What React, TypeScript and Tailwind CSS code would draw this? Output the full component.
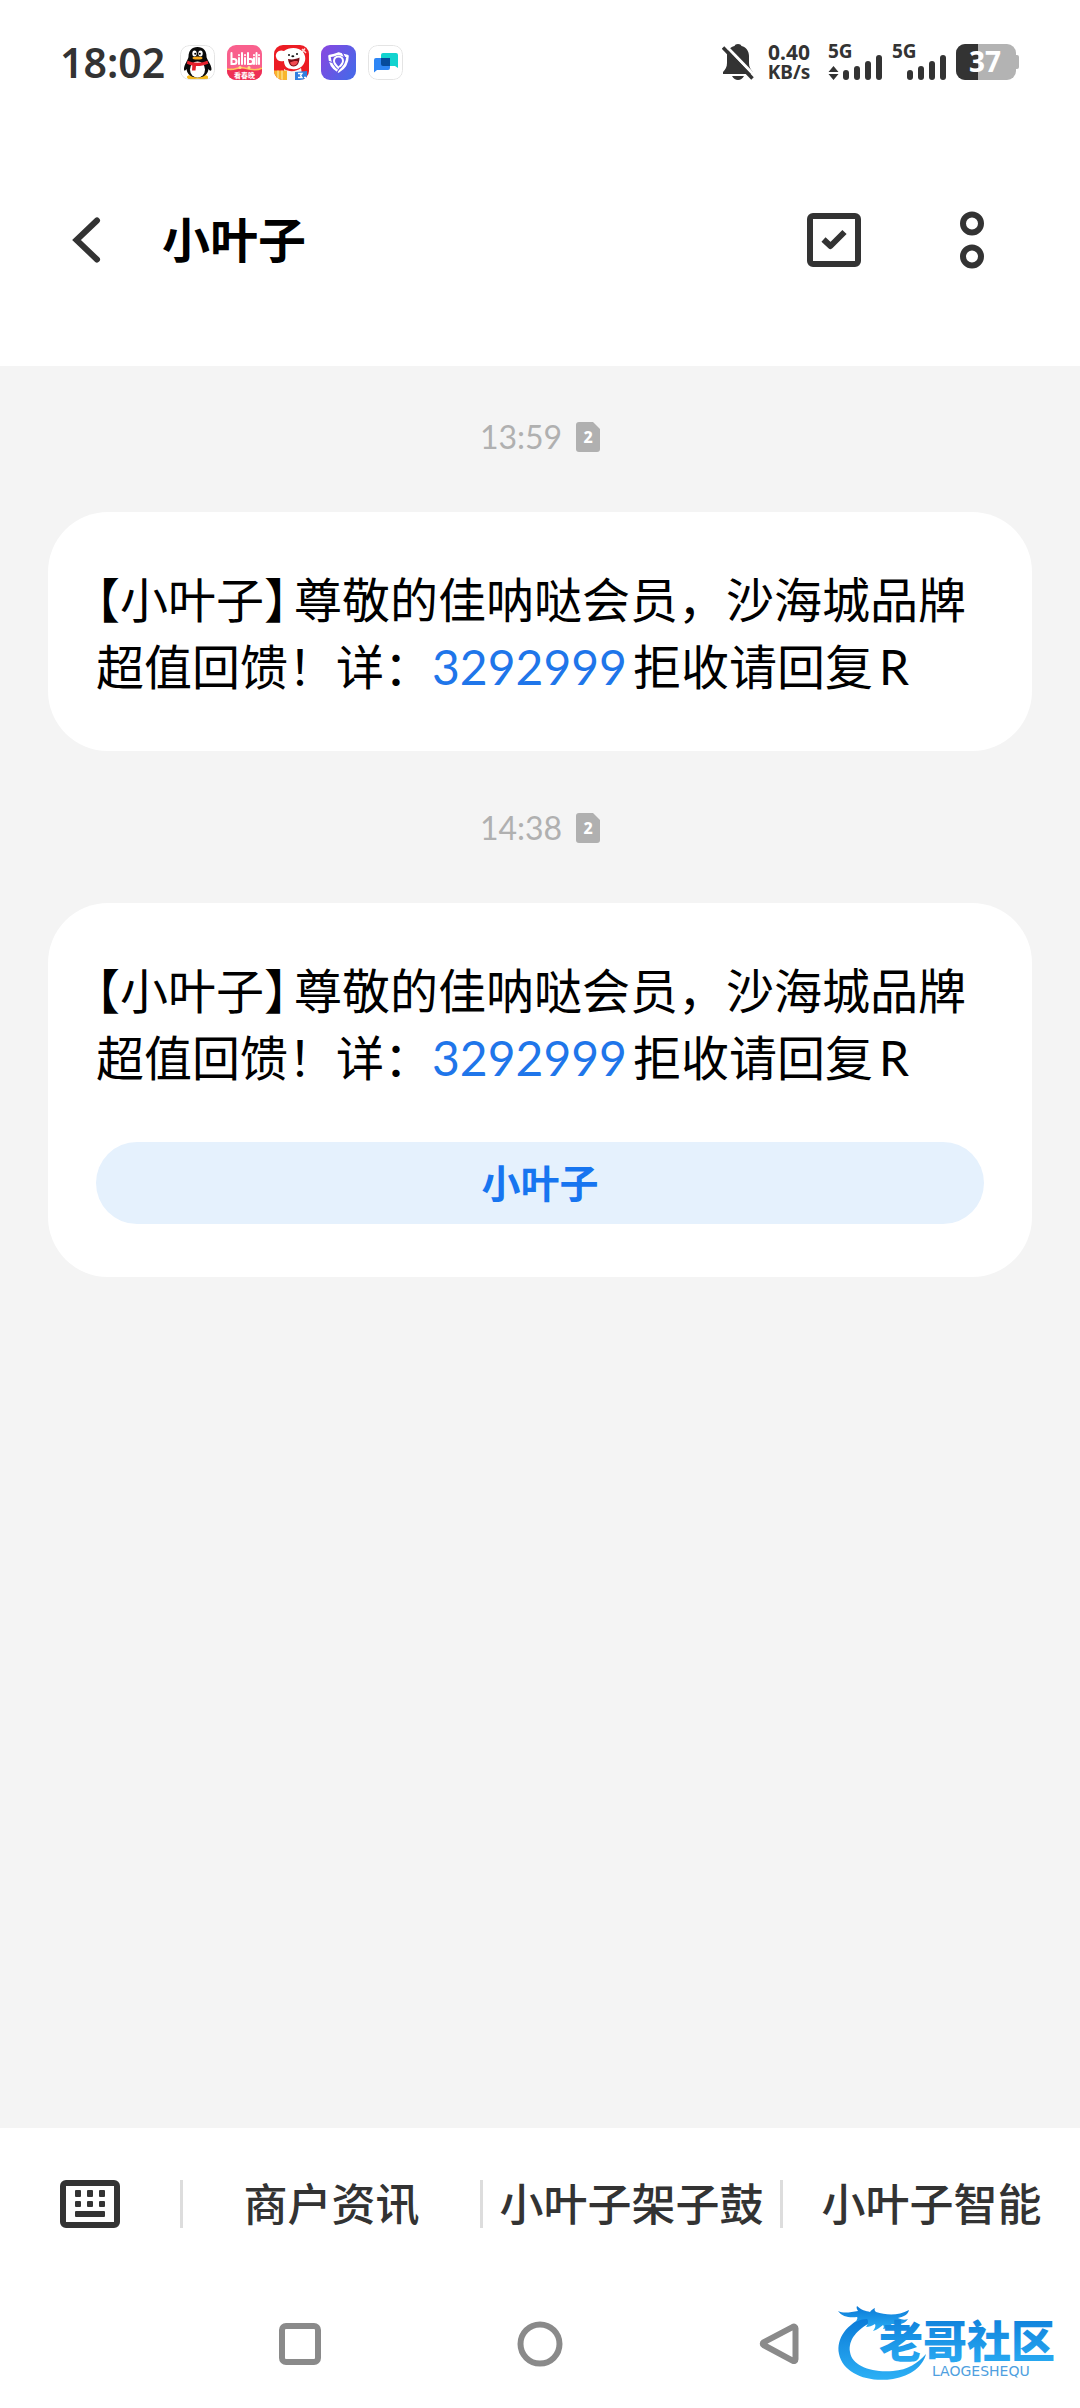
import type { ReactNode } from 'react'

interface Message {
  id: number
  time: string
  sim: number
  sender: string
  before: string
  code: string
  after: string
  action?: string
}

const MESSAGES: Message[] = [
  {
    id: 1,
    time: '13:59',
    sim: 2,
    sender: '小叶子',
    before: '尊敬的佳呐哒会员，沙海城品牌超值回馈！详：',
    code: '3292999',
    after: '拒收请回复R',
  },
  {
    id: 2,
    time: '14:38',
    sim: 2,
    sender: '小叶子',
    before: '尊敬的佳呐哒会员，沙海城品牌超值回馈！详：',
    code: '3292999',
    after: '拒收请回复R',
    action: '小叶子',
  },
]

const MENU = ['商户资讯', '小叶子架子鼓', '小叶子智能']

function AppIcon({ children }: { children: ReactNode }) {
  return (
    <svg viewBox="0 0 35 35" className="size-[35px] rounded-[9px]" aria-hidden="true">
      {children}
    </svg>
  )
}

function PenguinIcon() {
  return (
    <AppIcon>
      <rect x="0.5" y="0.5" width="34" height="34" rx="9" fill="#fff" stroke="#e4e4e4" />
      <path d="M7 31.5h21v2.5H8z" fill="#f2c94c" />
      <ellipse cx="12" cy="32" rx="5" ry="2" fill="#f5b81c" />
      <ellipse cx="23" cy="32" rx="5" ry="2" fill="#f5b81c" />
      <path d="M17.500 2c-6 0-9 4-9 9.500 0 3-4.500 8-4.500 12.500 0 2 1 2.500 2.500 0 .5 5 4.500 8.500 11 8.500s10.500-3.500 11-8.500c1.500 2.500 3 2 3 0 0-4.500-5-9.500-5-12.500 0-5.500-3-9.500-9-9.500z" fill="#0a0a0a" />
      <ellipse cx="17.500" cy="24.500" rx="7.500" ry="8" fill="#fff" />
      <ellipse cx="14.500" cy="8.500" rx="2.200" ry="2.900" fill="#fff" />
      <ellipse cx="20.500" cy="8.500" rx="2.200" ry="2.900" fill="#fff" />
      <circle cx="15.200" cy="8.800" r="1" fill="#000" />
      <circle cx="19.800" cy="8.800" r="1" fill="#000" />
      <ellipse cx="17.500" cy="13" rx="5" ry="1.500" fill="#f7a81b" />
      <path d="M7.500 15.500c6 3 14 3 20 0l.8 3.300c-5 2-9 2.400-12.300 2.200l-.5 4.500h-3.500l.3-5.100c-2-.3-3.800-.8-5.400-1.600z" fill="#e5202b" />
    </AppIcon>
  )
}

function VideoIcon() {
  return (
    <AppIcon>
      <rect width="35" height="35" fill="#f9608d" />
      <g stroke="#fff" strokeWidth="2" fill="none" strokeLinecap="round">
        <path d="M4.500 8v11h2.500a2.500 2.500 0 0 0 0-5H4.500M12 13v6M15 8v11M12 10v.2M18 13v6M18 10v.2" />
        <path d="M21 8v11h2.500a2.500 2.500 0 0 0 0-5H21M27 13v6M29.500 8v11M32 13v6M27 10v.2M32 10v.2" />
      </g>
      <path d="M0 23c6 3 11-2 17.500 0S29 26 35 22v13H0z" fill="#ee2f55" />
      <path d="M0 24c8 2 11-3 17.500-1S30 26 35 23" stroke="#ffc45c" strokeWidth="1.600" fill="none" />
      <circle cx="13" cy="22.500" r="1.500" fill="#ffe28a" />
      <circle cx="22" cy="22.500" r="1.500" fill="#ffe28a" />
      <text x="17.500" y="33" fontSize="7" fontWeight="700" textAnchor="middle" fill="#fff" fontFamily="'Noto Sans CJK SC', sans-serif">看春晚</text>
    </AppIcon>
  )
}

function ShopIcon() {
  return (
    <AppIcon>
      <rect width="35" height="35" fill="#ec1c24" />
      <path d="M28 4l4 4M31 3.500l-4 5" stroke="#ffd5d5" strokeWidth="1.500" />
      <path d="M2 12c-1-4 3-8 8-6 5-4 15-4 19 1 3 4 3 9 0 13-2 3-7 5-11 4-5 0-8-3-8-8-4 1-7 0-8-4z" fill="#fff" />
      <path d="M14 14c4 1 9 0 11.500-1.500 0 5-2 9-6 9-3 0-5-3-5.500-7.500z" fill="#7a0d16" />
      <path d="M16 17.500c2-1 6-2 8-1-1 4.500-6 6-8 1z" fill="#ef4a50" />
      <circle cx="15" cy="10" r="1" fill="#111" />
      <circle cx="23" cy="9" r="1" fill="#111" />
      <ellipse cx="18.800" cy="11.300" rx="1.500" ry="1" fill="#111" />
      <path d="M10 24c5 3 12 3 17-1l2 12H10z" fill="#f4f4f4" />
      <path d="M0 25.500h13V35H0z" fill="#f8b62d" />
      <path d="M4 25.500V35M8 25.500V35" stroke="#fff0b0" strokeWidth="1" />
      <path d="M21 27l12-1v9H21z" fill="#2f7fe0" />
      <path d="M24 28.500h4l-1.500 2 1.500 2h-4M30 32.500h2" stroke="#fff" strokeWidth="1.300" fill="none" />
    </AppIcon>
  )
}

function ShieldIcon() {
  return (
    <AppIcon>
      <defs>
        <linearGradient id="shield" x1="0" y1="0" x2="1" y2="0.600">
          <stop offset="0" stopColor="#8a45e0" />
          <stop offset="1" stopColor="#4a66e8" />
        </linearGradient>
      </defs>
      <rect width="35" height="35" fill="url(#shield)" />
      <path d="M8.500 11C13 10.500 15 9.500 17.500 8.500c2.500 1 5 2 9 2.500 0 7-3 12-9 15.500-6-3.500-9-8.500-9-15.500z" fill="none" stroke="#fff" strokeWidth="2.600" strokeLinejoin="round" />
      <path d="M13 16c0-2.500 2-4.500 4.500-4.500s4.500 2 4.500 4.500-2 4.500-4.500 7c-2.500-2.500-4.500-4.500-4.500-7z" fill="none" stroke="#fff" strokeWidth="2" />
      <path d="M6.500 16l5 1.500M21.500 8l2.500 5M15.500 28l4-6" stroke="#6a55e5" strokeWidth="1.200" />
    </AppIcon>
  )
}

function MeetingIcon() {
  return (
    <AppIcon>
      <rect x="0.500" y="0.500" width="34" height="34" rx="9" fill="#fff" stroke="#e4e4e4" />
      <path d="M15 8h13a2 2 0 0 1 2 2v13l-3-2H15a2 2 0 0 1-2-2v-9a2 2 0 0 1 2-2z" fill="#12d3cf" />
      <path d="M8 13h14v10a2 2 0 0 1-2 2H9l-3 2.500V15a2 2 0 0 1 2-2z" fill="#2e86f5" />
      <path d="M13 13h9v8h-7a2 2 0 0 1-2-2z" fill="#064b9c" />
    </AppIcon>
  )
}

function MutedBell() {
  return (
    <svg viewBox="0 0 32 36" className="h-9 w-8" aria-hidden="true">
      <path d="M16 0c-2 0-3 .8-3.500 2C8 3.200 5 7 5 12v7c0 4-1.500 6-4 9v2h30v-2c-2.500-3-4-5-4-9v-7c0-5-3-8.800-7.500-10C19 .8 18 0 16 0z" fill="#333" />
      <path d="M10 32h12c-1.500 2.500-3.500 4-6 4s-4.500-1.500-6-4z" fill="#333" />
      <path d="M3 1l30 31" stroke="#fff" strokeWidth="3" />
      <path d="M1 3.500l29.500 31" stroke="#333" strokeWidth="3.500" />
    </svg>
  )
}

function Signal({ active = false }: { active?: boolean }) {
  return (
    <svg viewBox="0 0 54 36" className="h-9 w-[54px] overflow-visible" aria-hidden="true">
      <text x="0" y="14" fontSize="19" fontWeight="700" fill="#333" fontFamily="'Noto Sans', sans-serif">5G</text>
      {active && <path d="M5.500 22l5 6h-10zM5.500 36l-5-6h10z" fill="#333" />}
      <g fill="#333">
        <rect x="15" y="26" width="6" height="10" rx="3" />
        <rect x="26" y="22" width="6" height="14" rx="3" />
        <rect x="37" y="17" width="6" height="19" rx="3" />
        <rect x="48" y="11" width="6" height="25" rx="3" />
      </g>
    </svg>
  )
}

function Battery() {
  return (
    <svg viewBox="0 0 64 36" className="h-9 w-16 overflow-visible" aria-hidden="true">
      <rect x="57" y="11" width="6" height="14" rx="2" fill="#b3b3b3" />
      <rect width="60" height="36" rx="9" fill="#b3b3b3" />
      <path d="M22 0H9a9 9 0 0 0-9 9v18a9 9 0 0 0 9 9h13z" fill="#333" />
      <text x="29" y="28" fontSize="28" fontWeight="700" textAnchor="middle" fill="#fff" fontFamily="'Noto Sans', sans-serif">37</text>
    </svg>
  )
}

function StatusBar() {
  return (
    <div className="flex h-[124px] items-center justify-between px-[60px] font-['Noto_Sans',sans-serif] text-[#333]">
      <div className="flex items-center gap-3">
        <span className="w-[108px] text-[41px] leading-none font-semibold">18:02</span>
        <PenguinIcon />
        <VideoIcon />
        <ShopIcon />
        <ShieldIcon />
        <MeetingIcon />
      </div>
      <div className="flex items-center gap-2.5">
        <MutedBell />
        <div className="mr-1 flex w-[50px] flex-col items-center font-bold">
          <span className="text-[21px] leading-5">0.40</span>
          <span className="text-[19px] leading-5">KB/s</span>
        </div>
        <Signal active />
        <Signal />
        <Battery />
      </div>
    </div>
  )
}

function Header() {
  return (
    <header className="flex h-[232px] items-center justify-between pr-[96px] pl-16">
      <div className="flex items-center gap-[50px]">
        <button type="button" aria-label="返回">
          <svg viewBox="0 0 48 48" className="size-12" fill="none" stroke="#333" strokeWidth="6" strokeLinecap="round">
            <path d="M33 4.500L12.500 24l20.500 19.500" />
          </svg>
        </button>
        <h1 className="text-5xl font-semibold text-black">小叶子</h1>
      </div>
      <div className="flex items-center gap-[99px]">
        <button type="button" aria-label="选择">
          <svg viewBox="0 0 54 54" className="size-[54px]" fill="none" stroke="#333" strokeWidth="6">
            <rect x="3" y="3" width="48" height="48" rx="3" />
            <path d="M16.500 26.500l7 6.500L37.500 19" strokeLinejoin="round" />
          </svg>
        </button>
        <button type="button" aria-label="更多">
          <svg viewBox="0 0 24 58" className="h-[58px] w-6" fill="none" stroke="#333" strokeWidth="6">
            <circle cx="12" cy="12.500" r="9" />
            <circle cx="12" cy="45.500" r="9" />
          </svg>
        </button>
      </div>
    </header>
  )
}

function SimBadge({ sim }: { sim: number }) {
  return (
    <svg viewBox="0 0 24 30" className="h-[30px] w-6" aria-hidden="true">
      <path d="M3 0h14l7 7v20a3 3 0 0 1-3 3H3a3 3 0 0 1-3-3V3a3 3 0 0 1 3-3z" fill="#b0b0b0" />
      <text x="12" y="21" fontSize="16" fontWeight="800" textAnchor="middle" fill="#fff" fontFamily="'Noto Sans', sans-serif">{sim}</text>
    </svg>
  )
}

function MessageItem({ message }: { message: Message }) {
  return (
    <section>
      <div className="flex h-[146px] items-center justify-center gap-3.5 pb-1 text-[#b0b0b0]">
        <time className="text-[32px] leading-none">{message.time}</time>
        <SimBadge sim={message.sim} />
      </div>
      <div className="rounded-[60px] bg-white px-12 pt-[54px] pb-[51px]">
        <p className="text-5xl leading-[67px] text-black [text-autospace:normal]">
          <span className="mr-1.5 [font-feature-settings:'halt']">{`【${message.sender}】`}</span>
          {message.before}
          <a href={`tel:${message.code}`} className="text-[#1f76ea]">{message.code}</a>
          {message.after}
        </p>
        {message.action && (
          <button type="button" className="mt-[51px] mb-0.5 h-[82px] w-full rounded-full bg-[#e5f1fd] text-[39px] leading-none font-semibold text-[#1775f0]">
            {message.action}
          </button>
        )}
      </div>
    </section>
  )
}

function MenuBar() {
  return (
    <div className="flex h-[152px] items-center bg-white text-[#333]">
      <button type="button" aria-label="键盘" className="flex w-[180px] justify-center">
        <svg viewBox="0 0 60 48" className="h-12 w-[60px]" fill="#333">
          <rect x="3" y="3" width="54" height="42" rx="3" fill="none" stroke="#333" strokeWidth="6" />
          <rect x="15" y="10" width="6" height="7" rx="1" />
          <rect x="27" y="10" width="6" height="7" rx="1" />
          <rect x="39" y="10" width="6" height="7" rx="1" />
          <rect x="15" y="21" width="6" height="6" rx="1" />
          <rect x="27" y="21" width="6" height="6" rx="1" />
          <rect x="39" y="21" width="6" height="6" rx="1" />
          <rect x="15" y="31" width="30" height="6" rx="1" />
        </svg>
      </button>
      {MENU.map((label) => (
        <button key={label} type="button" className="h-12 flex-1 basis-0 border-l-[3px] border-[#ddd] text-[44px] leading-none font-medium whitespace-nowrap">
          {label}
        </button>
      ))}
    </div>
  )
}

function Watermark() {
  return (
    <svg viewBox="0 0 228 84" className="pointer-events-none absolute top-[22px] right-[16px] h-[84px] w-[228px]" role="img" aria-label="老哥社区">
      <defs>
        <linearGradient id="dragon" x1="0" y1="0" x2="0" y2="1">
          <stop offset="0" stopColor="#0a78d6" />
          <stop offset="1" stopColor="#2cb0f5" />
        </linearGradient>
      </defs>
      <g fill="url(#dragon)">
        <path d="M30 14C11 22 0 36 3 52c4 19 28 29 54 25 18-3 30-13 33-25-8 9-18 16-33 17-21 2-41-5-43-19-2-12 7-23 22-30z" />
        <path d="M2 9c6 3 13 1 20 0-1-2-2-3-1-5 4 4 9 5 13 6 1-2 3-3 5-4-1 2 0 3 1 4 10 3 22 4 33-2-1 5-6 7-11 8 4 2 7 2 10 1-3 5-10 6-16 5-3 2-5 5-9 5 1-2 1-3 0-4-3 2-6 5-10 6 2-3 3-5 2-7-3 2-6 3-9 3 2-3 3-6 1-8-4 0-8 1-11 3 1-3 2-4 1-5-7 1-15 0-19-6z" />
      </g>
      <text x="43" y="56" fontSize="44" fontWeight="900" fill="url(#dragon)" fontFamily="'Noto Sans CJK SC', sans-serif">老哥社区</text>
      <text x="96" y="74" fontSize="14" fill="#4f9fe0" fontFamily="'DejaVu Sans', sans-serif">LAOGESHEQU</text>
    </svg>
  )
}

function SystemNav() {
  return (
    <nav className="relative h-32 bg-white">
      <div className="mx-auto grid h-full w-2/3 grid-cols-3 place-items-center">
        <button type="button" aria-label="最近任务">
          <svg viewBox="0 0 48 48" className="size-12" fill="none" stroke="#8a8a8a" strokeWidth="6">
            <rect x="6" y="6" width="36" height="36" rx="4" />
          </svg>
        </button>
        <button type="button" aria-label="主屏幕">
          <svg viewBox="0 0 48 48" className="size-12" fill="none" stroke="#8a8a8a" strokeWidth="6">
            <circle cx="24" cy="24" r="19.500" />
          </svg>
        </button>
        <button type="button" aria-label="后退">
          <svg viewBox="0 0 48 48" className="size-12" fill="none" stroke="#8a8a8a" strokeWidth="6" strokeLinejoin="round">
            <path d="M7.500 25c-1-.6-1-2 0-2.600L37 6.800c1.200-.6 2.500 0 2.500 1.500v31c0 1.500-1.300 2.200-2.500 1.500z" />
          </svg>
        </button>
      </div>
      <Watermark />
    </nav>
  )
}

export default function App() {
  return (
    <div className="flex min-h-screen flex-col bg-white font-['Lato','Noto_Sans_CJK_SC',sans-serif]" lang="zh-CN">
      <StatusBar />
      <Header />
      <main className="mt-2.5 flex flex-1 flex-col gap-1.5 bg-[#f4f4f4] px-12">
        {MESSAGES.map((message) => (
          <MessageItem key={message.id} message={message} />
        ))}
      </main>
      <MenuBar />
      <SystemNav />
    </div>
  )
}
